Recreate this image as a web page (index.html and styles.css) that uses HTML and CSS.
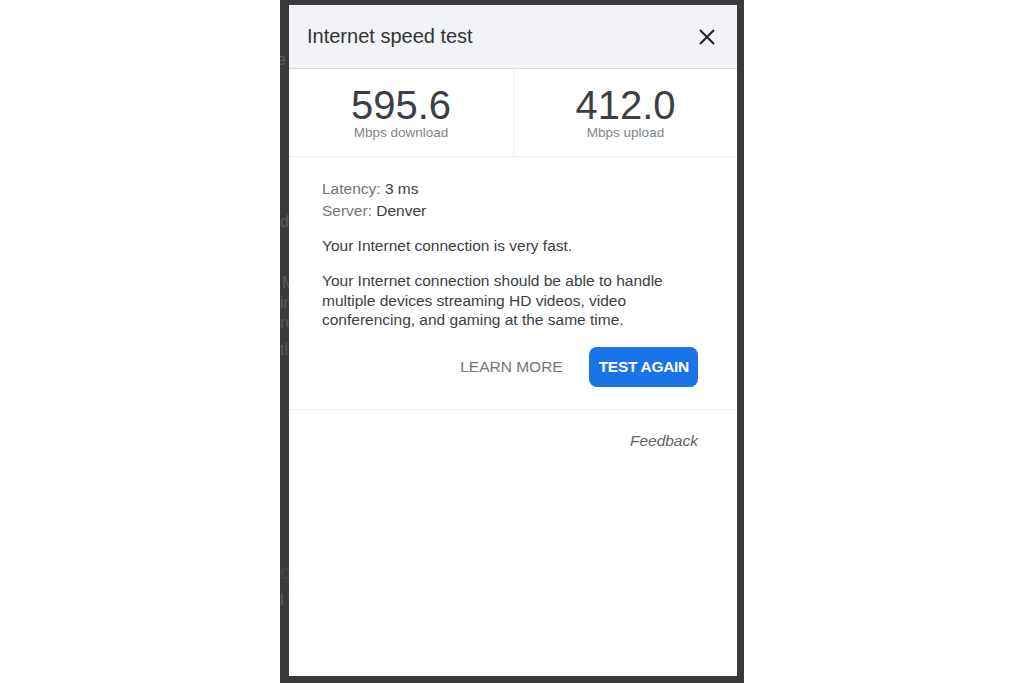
FILE: index.html
```html
<!DOCTYPE html>
<html lang="en">

<head>
    <meta charset="UTF-8" />
    <meta name="viewport" content="width=device-width, initial-scale=1.0" />
    <title>Internet speed test</title>
    <link rel="stylesheet" href="styles.css">
</head>

<body>
    <div class="frame">
        <!-- page behind the dialog, dimmed -->
        <div class="ghost">
            <div class="g g1">e</div>
            <div class="g g2">d</div>
            <div class="g g3">M</div>
            <div class="g g4">ir</div>
            <div class="g g5">re</div>
            <div class="g g6">tl</div>
            <div class="g g7">c</div>
            <div class="g g8">l t</div>
        </div>

        <div class="dialog">
            <div class="dialog-head">
                <span class="title">Internet speed test</span>
                <button class="close" aria-label="Close">
                    <svg width="16" height="16" viewBox="0 0 16 16">
                        <path d="M1 1 L15 15 M15 1 L1 15" stroke="#202124" stroke-width="2" fill="none" />
                    </svg>
                </button>
            </div>

            <div class="stats">
                <div class="stat">
                    <div class="num">595.6</div>
                    <div class="unit">Mbps download</div>
                </div>
                <div class="stat">
                    <div class="num">412.0</div>
                    <div class="unit">Mbps upload</div>
                </div>
            </div>

            <div class="details">
                <div class="meta">
                    <div><span class="key">Latency:</span> 3 ms</div>
                    <div><span class="key">Server:</span> Denver</div>
                </div>
                <p class="verdict">Your Internet connection is very fast.</p>
                <p class="advice">Your Internet connection should be able to handle multiple devices streaming HD videos, video conferencing, and gaming at the same time.</p>
                <div class="actions">
                    <button class="text-btn">LEARN MORE</button>
                    <button class="primary-btn">TEST AGAIN</button>
                </div>
            </div>

            <div class="foot">
                <a class="feedback" href="#">Feedback</a>
            </div>
        </div>
    </div>
</body>

</html>
```

FILE: styles.css
```css
body {
    margin: 0;
    background-color: #ffffff;
    font-family: "Liberation Sans", Arial, sans-serif;
    display: flex;
    justify-content: center;
}

.frame {
    display: flex;
    width: 464px;
    height: 683px;
    padding: 5px 7px 7px 0;
    box-sizing: border-box;
    background-color: #3a3a3a;
}

/* strip of the page that shows left of the dialog */
.ghost {
    width: 9px;
    overflow: hidden;
    color: #5c5c5c;
    font-size: 16px;
    line-height: 20px;
    white-space: nowrap;
}

.g1 { margin-top: 45px; text-indent: -3px; }
.g2 { margin-top: 142px; }
.g3 { margin-top: 41px; text-indent: 2px; }
.g4 { margin-top: 0; }
.g5 { margin-top: 0; }
.g6 { margin-top: 7px; }
.g7 { margin-top: 202px; color: #4a4450; font-size: 20px; }
.g8 { margin-top: 8px; }

.dialog {
    width: 448px;
    background-color: #ffffff;
    display: flex;
    flex-direction: column;
}

.dialog-head {
    height: 63px;
    display: flex;
    align-items: center;
    justify-content: space-between;
    padding: 0 22px 0 18px;
    background-color: #f1f3f6;
    border-bottom: 1px solid #d9dbde;
}

.title {
    font-size: 20px;
    color: #333333;
}

.close {
    padding: 0;
    border: none;
    background: none;
    display: flex;
}

.stats {
    display: grid;
    grid-template-columns: 1fr 1fr;
    border-bottom: 1px solid #f0f0f0;
}

.stat {
    padding: 16px 0 15px;
    text-align: center;
}

.stat + .stat {
    border-left: 1px solid #ededed;
}

.num {
    font-size: 40px;
    line-height: 40px;
    color: #3c4043;
}

.unit {
    font-size: 13.5px;
    line-height: 16px;
    color: #80868b;
}

.details {
    padding: 21px 39px 22px 33px;
    font-size: 15.5px;
    color: #3c4043;
    border-bottom: 1px solid #f3f3f3;
}

.meta {
    line-height: 22px;
}

.key {
    color: #70757a;
}

.verdict {
    margin: 14px 0 0;
    line-height: 20px;
}

.advice {
    margin: 15px 0 0;
    line-height: 19.5px;
}

.actions {
    display: flex;
    justify-content: flex-end;
    align-items: center;
    gap: 26px;
    margin-top: 17.5px;
}

.text-btn {
    padding: 0;
    border: none;
    background: none;
    font-family: inherit;
    font-size: 15.5px;
    color: #757575;
}

.primary-btn {
    height: 40px;
    padding: 0 9px 0 10px;
    border: none;
    border-radius: 8px;
    background-color: #1a73e8;
    color: #ffffff;
    font-family: inherit;
    font-size: 15.5px;
    font-weight: bold;
    letter-spacing: -0.3px;
}

.foot {
    display: flex;
    justify-content: flex-end;
    padding: 21px 39px 0 33px;
    line-height: 20px;
}

.feedback {
    font-size: 15.5px;
    font-style: italic;
    color: #5f6368;
    text-decoration: none;
}
```
